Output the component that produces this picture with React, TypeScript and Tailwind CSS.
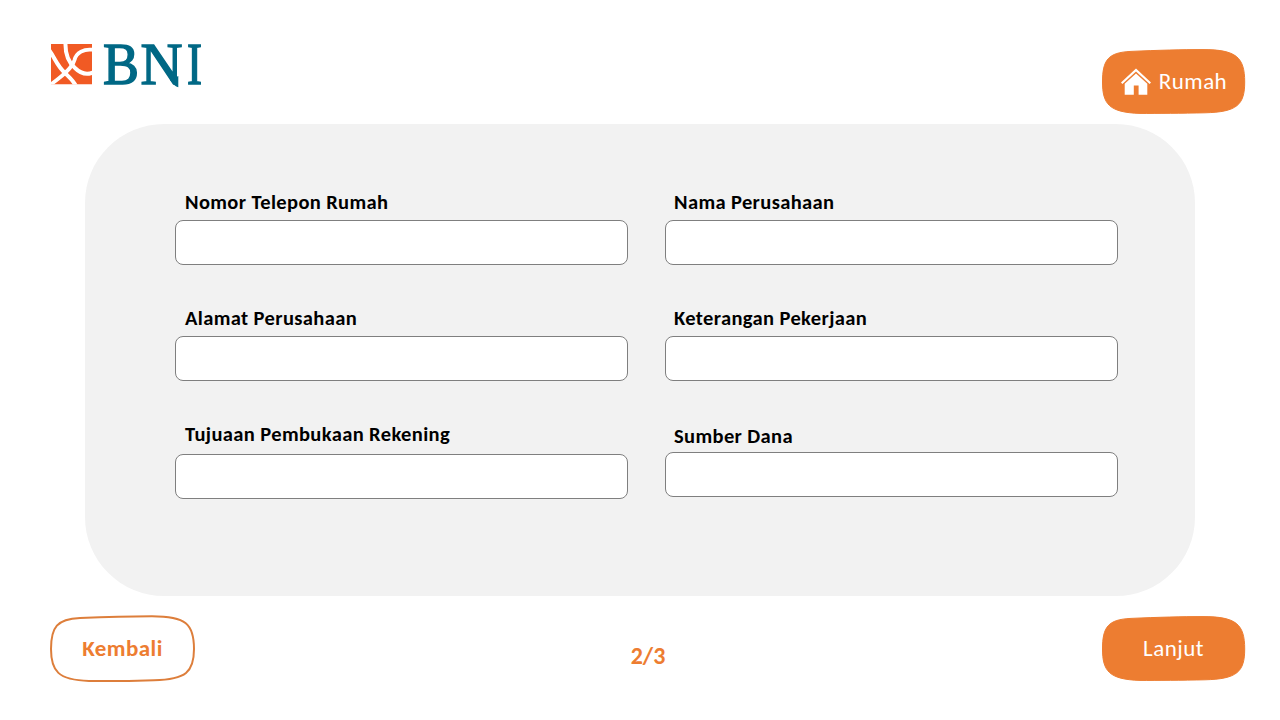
import type { ReactNode } from 'react';

function Logo() {
  return (
    <svg className="block h-[72px] w-[160px]" viewBox="0 -14 160 72" role="img" aria-label="BNI">
      <defs>
        <clipPath id="mark"><rect x="1" y="2" width="41" height="40.5" /></clipPath>
      </defs>
      <g clipPath="url(#mark)">
        <rect x="1" y="2" width="41" height="40.5" fill="#f15a24" />
        <g fill="none" stroke="#fff">
          <path d="M-1 8C5 16 7 24 15 31C19 35 23 38 26 44" strokeWidth="4" />
          <path d="M15.5 0C15 12 18 20 25 26C31 32 38 33 44 30" strokeWidth="4" />
          <path d="M44 8C34 6 26 11 24.5 18C22 26 14 33 0 43" strokeWidth="3.8" />
        </g>
      </g>
      <g fill="#006885" stroke="#006885" strokeWidth="1.5" fontFamily="Liberation Serif, serif" fontSize="60">
        <text x="53" y="42" textLength="36" lengthAdjust="spacingAndGlyphs">B</text>
        <text x="90.5" y="42" textLength="42" lengthAdjust="spacingAndGlyphs">N</text>
        <text x="137" y="42" textLength="15" lengthAdjust="spacingAndGlyphs">I</text>
      </g>
      <path d="M120 38L128.3 34V45.2C126.5 45 124.5 43.5 122.5 41Z" fill="#006885" />
    </svg>
  );
}

function ShapeButton({ outline = false, children }: { outline?: boolean; children: ReactNode }) {
  return (
    <button className="relative flex h-[68px] w-[147px] items-center justify-center">
      <svg className="absolute inset-0 h-full w-full" viewBox="0 0 147 68" aria-hidden="true">
        <path
          d={outline
            ? 'M2 34C2 12 8 4 31 3C58 1.8 82 1.2 103 1.2C137 1.2 145 9 145 34C145 57 137 64.4 105 65.2C82 66 57 66.2 40 66C9 65 2 56 2 34Z'
            : 'M2.5 34C2.5 12 8 4.4 31 3.4C58 2.2 82 1.6 103 1.6C136 1.6 144.7 9 144.7 34C144.7 57 137 64 105 64.8C82 65.3 57 65.5 40 65.4C9 64.5 2.5 56 2.5 34Z'}
          fill={outline ? '#fff' : '#ed7d31'}
          stroke={outline ? '#dd7e3b' : '#ed7d31'}
          strokeWidth={outline ? 2 : 1}
        />
      </svg>
      <span className="relative flex items-center">{children}</span>
    </button>
  );
}

function HomeIcon() {
  return (
    <svg className="mr-px block h-[28px] w-[32px]" viewBox="0 0 32 28" fill="#fff" aria-hidden="true">
      <path d="M16 .4L31 14.6L29.6 16.1L16 3.5L2.4 16.1L1 14.6Z" />
      <path d="M16 5.4L27.3 15.8V26.8H18.6V17.6H13.8V26.8H4.7V15.8Z" />
    </svg>
  );
}

function Field({ label, id, labelClass, className = '' }: { label: string; id: string; labelClass: string; className?: string }) {
  return (
    <div className={`flex flex-col ${className}`}>
      <label htmlFor={id} className={`whitespace-nowrap text-[20.5px] leading-[24px] font-bold tracking-[0.38px] text-black ${labelClass}`}>{label}</label>
      <input id={id} className="block h-[45px] w-[453px] rounded-lg border border-[#7f7f7f] bg-white px-3 outline-none" />
    </div>
  );
}

export default function App() {
  return (
    <main className="flex h-[720px] w-[1280px] flex-col overflow-hidden bg-white font-['Carlito','Lato',sans-serif]">
      <header className="flex h-[124px] shrink-0 items-start justify-between pr-[33px] pl-[50px]">
        <div className="pt-[28px]"><Logo /></div>
        <div className="pt-[48px]">
          <ShapeButton>
            <HomeIcon />
            <span className="mb-[2px] ml-[6px] text-[23px] leading-[26px] tracking-[0.45px] text-white">Rumah</span>
          </ShapeButton>
        </div>
      </header>
      <section className="mx-[85px] flex h-[472px] shrink-0 gap-[37px] rounded-[79px] bg-[#f2f2f2] pt-[66px] pl-[90px]">
        <div className="flex w-[453px] flex-col">
          <Field id="telepon" label="Nomor Telepon Rumah" labelClass="mb-[6px] ml-[10px]" />
          <Field id="alamat" label="Alamat Perusahaan" labelClass="mb-[6px] ml-[10px]" className="mt-[41px]" />
          <Field id="tujuan" label="Tujuaan Pembukaan Rekening" labelClass="mb-[8px] ml-[10px]" className="mt-[41px]" />
        </div>
        <div className="flex w-[453px] flex-col">
          <Field id="perusahaan" label="Nama Perusahaan" labelClass="mb-[6px] ml-[9px]" />
          <Field id="pekerjaan" label="Keterangan Pekerjaan" labelClass="mb-[6px] ml-[9px]" className="mt-[41px]" />
          <Field id="dana" label="Sumber Dana" labelClass="mb-[4px] ml-[9px]" className="mt-[43px]" />
        </div>
      </section>
      <footer className="flex grow items-start justify-between pt-[19px] pr-[33px] pl-[49px]">
        <ShapeButton outline>
          <span className="mb-[2px] text-[23px] leading-[26px] font-bold tracking-[0.45px] text-[#ed7d31]">Kembali</span>
        </ShapeButton>
        <span className="mt-[27px] text-[24px] leading-[28px] font-bold text-[#ed7d31]">2/3</span>
        <ShapeButton>
          <span className="mb-[2px] text-[23px] leading-[26px] tracking-[0.45px] text-white">Lanjut</span>
        </ShapeButton>
      </footer>
    </main>
  );
}
